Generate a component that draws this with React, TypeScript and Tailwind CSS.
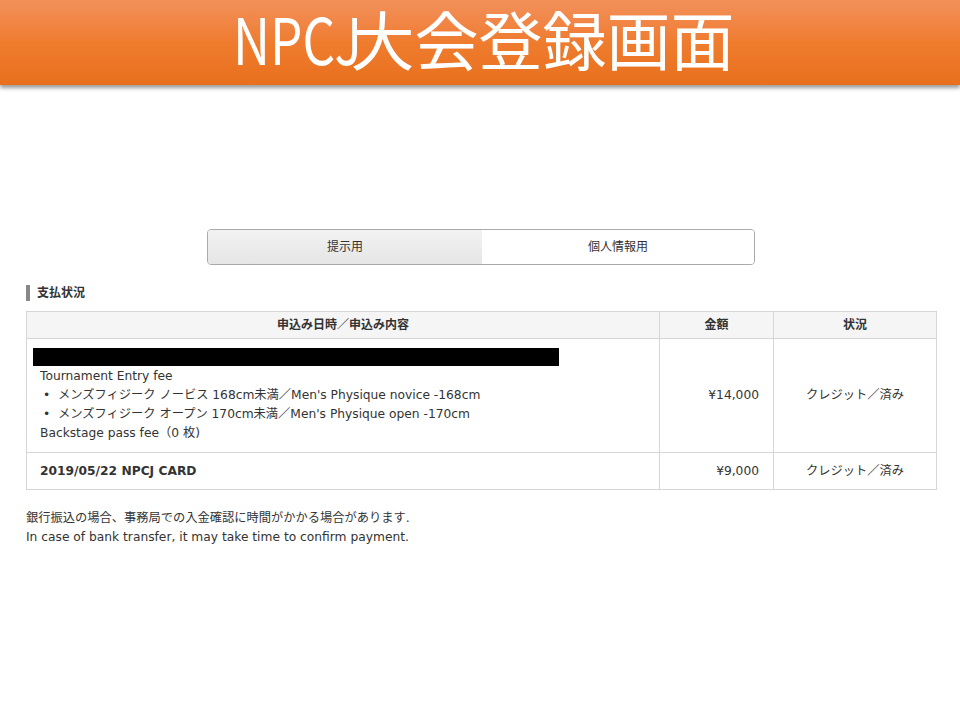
import React from "react";

export default function App() {
  const body = { fontFamily: '"DejaVu Sans", Verdana, "Noto Sans CJK JP", sans-serif' };
  return (
    <div className="w-[960px] h-[720px] bg-white relative overflow-hidden" style={body}>
      <div className="h-[85px] bg-gradient-to-b from-[#f2905a] via-[#ef7c2e] to-[#e8701c] shadow-[0_3px_4px_rgba(0,0,0,0.4)] flex items-center justify-center">
        <div className="text-white text-[64px] leading-[66px] h-[66px] -mt-[11px] ml-[8px] flex items-center whitespace-nowrap" style={{ fontFamily: '"Noto Sans CJK JP", sans-serif' }}>
          <span className="inline-block origin-left scale-x-[0.8] -mr-[44px]">NPCJ</span>
          <span>大会登録画面</span>
        </div>
      </div>

      <div className="pt-[144px] flex justify-center pl-[2px]">
        <div className="w-[548px] h-[36px] border border-[#aaa] rounded-[4px] flex overflow-hidden text-[12px] text-[#333]">
          <div className="w-[274px] bg-gradient-to-b from-[#f2f2f2] to-[#e6e6e6] flex items-center justify-center">提示用</div>
          <div className="flex-1 bg-white flex items-center justify-center">個人情報用</div>
        </div>
      </div>

      <div className="ml-[26px] mt-[20px] flex items-center h-[16px]">
        <div className="w-[4px] h-[16px] bg-[#888]" />
        <span className="ml-[7px] text-[12px] font-bold text-[#333]">支払状況</span>
      </div>

      <div className="ml-[26px] mt-[10px] w-[911px] border border-[#d6d6d6] text-[12.25px] text-[#333]">
        <div className="flex h-[27px] bg-[#f5f5f5] border-b border-[#d6d6d6] font-bold text-[12px]">
          <div className="w-[633px] border-r border-[#d6d6d6] flex items-center justify-center">申込み日時／申込み内容</div>
          <div className="w-[114px] border-r border-[#d6d6d6] flex items-center justify-center">金額</div>
          <div className="flex-1 flex items-center justify-center">状況</div>
        </div>
        <div className="flex h-[114px] border-b border-[#d6d6d6]">
          <div className="w-[633px] border-r border-[#d6d6d6] pl-[6px] pt-[9px]">
            <div className="w-[526px] h-[18px] bg-black" />
            <div className="pl-[7px] leading-[19px] mt-[1px]">
              <div>Tournament Entry fee</div>
              <div className="flex"><span className="w-[18px] pl-[3px]">•</span><span>メンズフィジーク ノービス 168cm未満／Men's Physique novice -168cm</span></div>
              <div className="flex"><span className="w-[18px] pl-[3px]">•</span><span>メンズフィジーク オープン 170cm未満／Men's Physique open -170cm</span></div>
              <div>Backstage pass fee（0 枚)</div>
            </div>
          </div>
          <div className="w-[114px] border-r border-[#d6d6d6] flex items-center justify-end pr-[14px]">¥14,000</div>
          <div className="flex-1 flex items-center justify-center">クレジット／済み</div>
        </div>
        <div className="flex h-[36px]">
          <div className="w-[633px] border-r border-[#d6d6d6] flex items-center pl-[13px] font-bold">2019/05/22 NPCJ CARD</div>
          <div className="w-[114px] border-r border-[#d6d6d6] flex items-center justify-end pr-[14px]">¥9,000</div>
          <div className="flex-1 flex items-center justify-center">クレジット／済み</div>
        </div>
      </div>

      <div className="ml-[26px] mt-[19px] text-[12.25px] leading-[19px] text-[#333]">
        <div>銀行振込の場合、事務局での入金確認に時間がかかる場合があります.</div>
        <div>In case of bank transfer, it may take time to confirm payment.</div>
      </div>
    </div>
  );
}
